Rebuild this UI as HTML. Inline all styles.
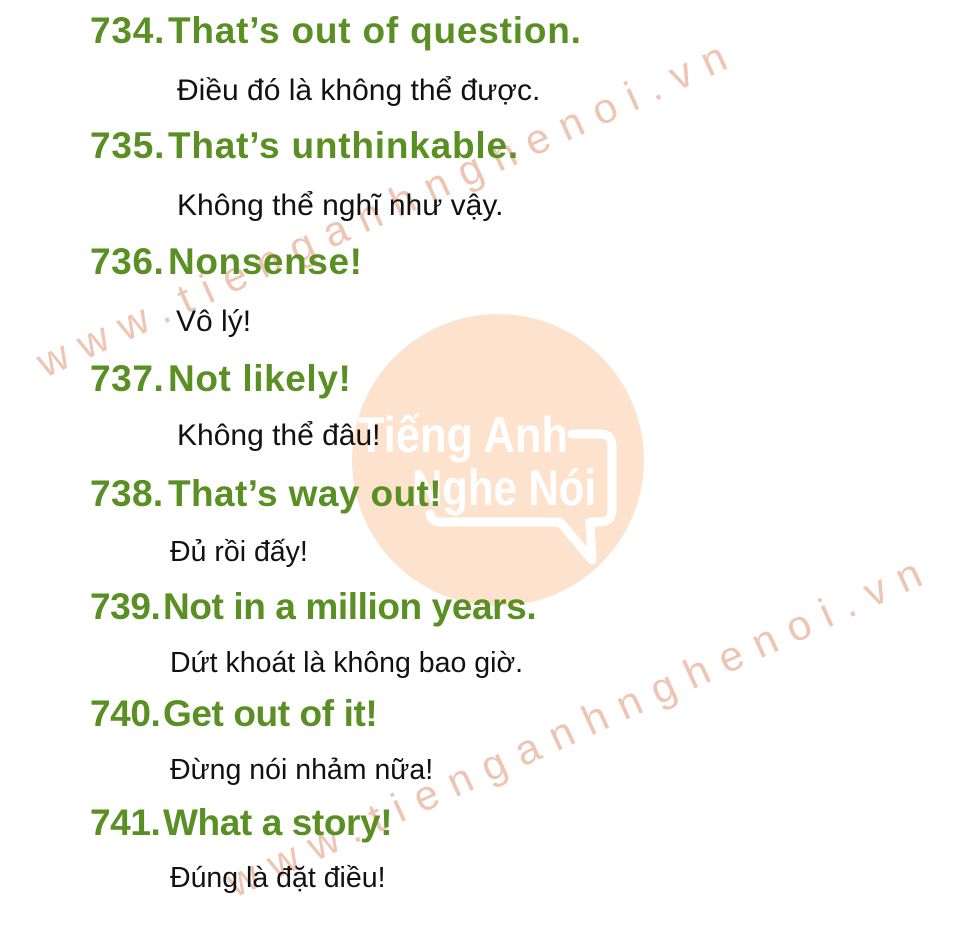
<!DOCTYPE html>
<html><head><meta charset="utf-8"><style>
html,body{margin:0;padding:0;background:#fff;width:960px;height:928px;overflow:hidden;position:relative}
.h{position:absolute;left:90px;font:bold 37px/1 "Liberation Sans",sans-serif;color:#5a8f23;white-space:nowrap}
.h span{display:inline-block;width:78px}
.t{position:absolute;font:30px/1 "Liberation Sans","Noto Sans CJK SC",sans-serif;color:#111;white-space:nowrap}
.l{letter-spacing:-0.4px}
.tl{font-size:28.5px}
svg{position:absolute;left:0;top:0}
</style></head><body>
<svg width="960" height="928">
<circle cx="498" cy="460" r="146" fill="#fde3cd"/>
<g fill="none" stroke="#fff" stroke-width="9" stroke-linejoin="round" stroke-linecap="round">
<path d="M572 434 L600 434 Q612 434 612 446 L612 510 Q612 522 600 522 L590 522 L592 560 L560 522 L440 522 Q432 522 430 514"/>
</g>
<g fill="#fff" font-family="Liberation Sans,sans-serif" font-weight="bold">
<text x="358" y="452" font-size="50" textLength="210" lengthAdjust="spacingAndGlyphs">Tiếng Anh</text>
<text x="412" y="505" font-size="50" textLength="184" lengthAdjust="spacingAndGlyphs">Nghe Nói</text>
</g>
<g fill="#eab5a0" fill-opacity="0.8" font-family="Liberation Sans,sans-serif" font-size="42">
<text transform="translate(45,378) rotate(-24.4)" textLength="752" lengthAdjust="spacing">www.tienganhnghenoi.vn</text>
<text transform="translate(235,898) rotate(-24.5)" textLength="758" lengthAdjust="spacing">www.tienganhnghenoi.vn</text>
</g>
</svg>
<div class="h" style="top:12px;letter-spacing:0.8px"><span>734.</span>That’s out of question.</div>
<div class="t" style="left:177px;top:76px">Điều đó là không thể được.</div>
<div class="h" style="top:127px;letter-spacing:0.8px"><span>735.</span>That’s unthinkable.</div>
<div class="t" style="left:177px;top:191px">Không thể nghĩ như vậy.</div>
<div class="h" style="top:243px;letter-spacing:0.6px"><span>736.</span>Nonsense!</div>
<div class="t" style="left:176px;top:307px">Vô lý!</div>
<div class="h" style="top:360px;letter-spacing:0.6px"><span>737.</span>Not likely!</div>
<div class="t" style="left:177px;top:421px">Không thể đâu!</div>
<div class="h" style="top:475px;letter-spacing:0.4px"><span>738.</span>That’s way out!</div>
<div class="t tl" style="left:170px;top:538px">Đủ rồi đấy!</div>
<div class="h l" style="top:588px"><span style="width:73px">739.</span>Not in a million years.</div>
<div class="t tl" style="left:170px;top:649px">Dứt khoát là không bao giờ.</div>
<div class="h l" style="top:695px"><span style="width:73px">740.</span>Get out of it!</div>
<div class="t tl" style="left:170px;top:756px">Đừng nói nhảm nữa!</div>
<div class="h l" style="top:804px"><span style="width:73px">741.</span>What a story!</div>
<div class="t tl" style="left:170px;top:864px">Đúng là đặt điều!</div>
</body></html>
